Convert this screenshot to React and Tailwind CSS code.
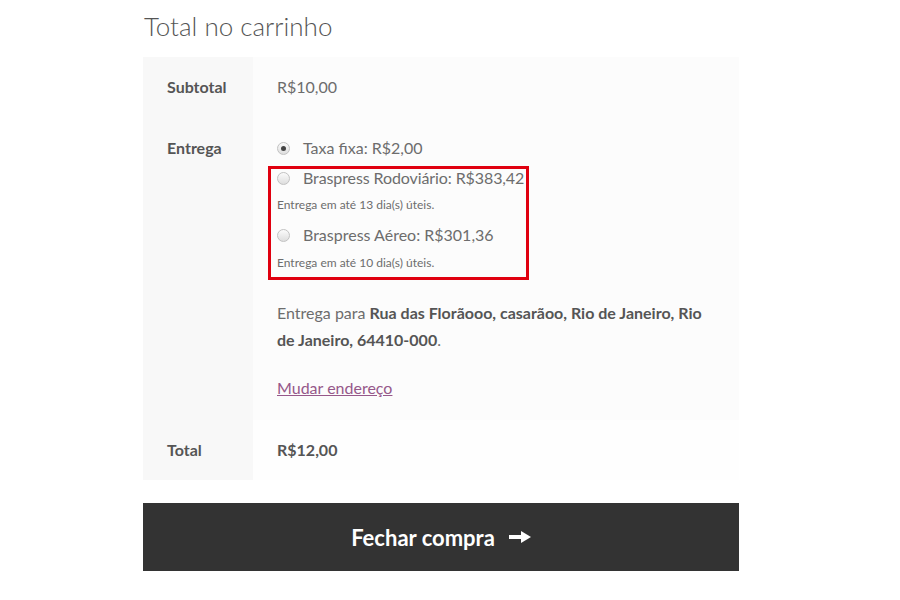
import React from 'react';

const Radio = ({ checked }) => (
  <span className="relative mr-[8px] inline-flex h-[13px] w-[13px] shrink-0 items-center justify-center rounded-full border border-[#c2c2c2] bg-gradient-to-b from-[#fbfbfb] to-[#dedede]">
    {checked && <span className="h-[5px] w-[5px] rounded-full bg-[#444]" />}
  </span>
);

const Arrow = () => (
  <svg width="22" height="12" viewBox="0 0 22 12" className="ml-[14px]">
    <rect x="0" y="4" width="14" height="4" fill="#fff" />
    <path d="M12 0 L22 6 L12 12 Z" fill="#fff" />
  </svg>
);

export default function App() {
  return (
    <div className="min-h-[600px] w-[900px] bg-white font-['Lato',sans-serif]">
      <div className="ml-[143px] w-[596px] pt-[8px]">
        <h2 className="h-[36px] pl-[1px] text-[26px] font-light leading-[36px] text-[#555]">Total no carrinho</h2>

        <div className="mt-[13px] flex flex-col">
          {/* Subtotal */}
          <div className="flex h-[60px]">
            <div className="flex w-[110px] items-center bg-[#f8f8f8] pl-[24px] text-[16px] font-bold text-[#555]">Subtotal</div>
            <div className="flex flex-1 items-center bg-[#fcfcfc] pl-[24px] text-[16px] text-[#6d6d6d]">R$10,00</div>
          </div>

          {/* Entrega */}
          <div className="flex h-[303px]">
            <div className="w-[110px] bg-[#f8f8f8] pl-[24px] pt-[18px] text-[16px] font-bold leading-[26px] text-[#555]">Entrega</div>
            <div className="flex flex-1 flex-col bg-[#fcfcfc] pl-[24px] pt-[18px] text-[#6d6d6d]">
              <div className="flex h-[26px] items-center text-[16px] leading-[26px]">
                <Radio checked />
                <span className="ml-[5px]">Taxa fixa: R$2,00</span>
              </div>

              <div className="-ml-[9px] mt-[5px] w-[261px] border-[3px] border-[#e0000f] pb-[6px] pl-[6px]">
                <div className="flex h-[18px] items-center whitespace-nowrap text-[16px] leading-[18px]">
                  <Radio />
                  <span className="ml-[5px] tracking-[-0.1px]">Braspress Rodoviário: R$383,42</span>
                </div>
                <div className="mt-[10px] h-[16px] text-[12px] leading-[16px]">Entrega em até 13 dia(s) úteis.</div>
                <div className="mt-[13px] flex h-[18px] items-center whitespace-nowrap text-[16px] leading-[18px]">
                  <Radio />
                  <span className="ml-[5px]">Braspress Aéreo: R$301,36</span>
                </div>
                <div className="mt-[11px] h-[16px] text-[12px] leading-[16px]">Entrega em até 10 dia(s) úteis.</div>
              </div>

              <div className="mt-[19px] text-[16px] leading-[27px]">
                <div className="whitespace-nowrap">
                  Entrega para <strong className="font-bold text-[#555]">Rua das Florãooo, casarãoo, Rio de Janeiro, Rio</strong>
                </div>
                <div className="whitespace-nowrap">
                  <strong className="font-bold text-[#555]">de Janeiro, 64410-000</strong>.
                </div>
              </div>
              <a className="mt-[22px] h-[26px] w-fit text-[16px] leading-[26px] text-[#96588a] underline">Mudar endereço</a>
            </div>
          </div>

          {/* Total */}
          <div className="flex h-[60px]">
            <div className="flex w-[110px] items-center bg-[#f8f8f8] pl-[24px] text-[16px] font-bold text-[#555]">Total</div>
            <div className="flex flex-1 items-center bg-[#fefefe] pl-[24px] text-[16px] font-bold text-[#555]">R$12,00</div>
          </div>
        </div>

        <button className="mt-[23px] flex h-[68px] w-full items-center justify-center bg-[#333] text-[22px] font-bold text-white">
          Fechar compra
          <Arrow />
        </button>
      </div>
    </div>
  );
}
